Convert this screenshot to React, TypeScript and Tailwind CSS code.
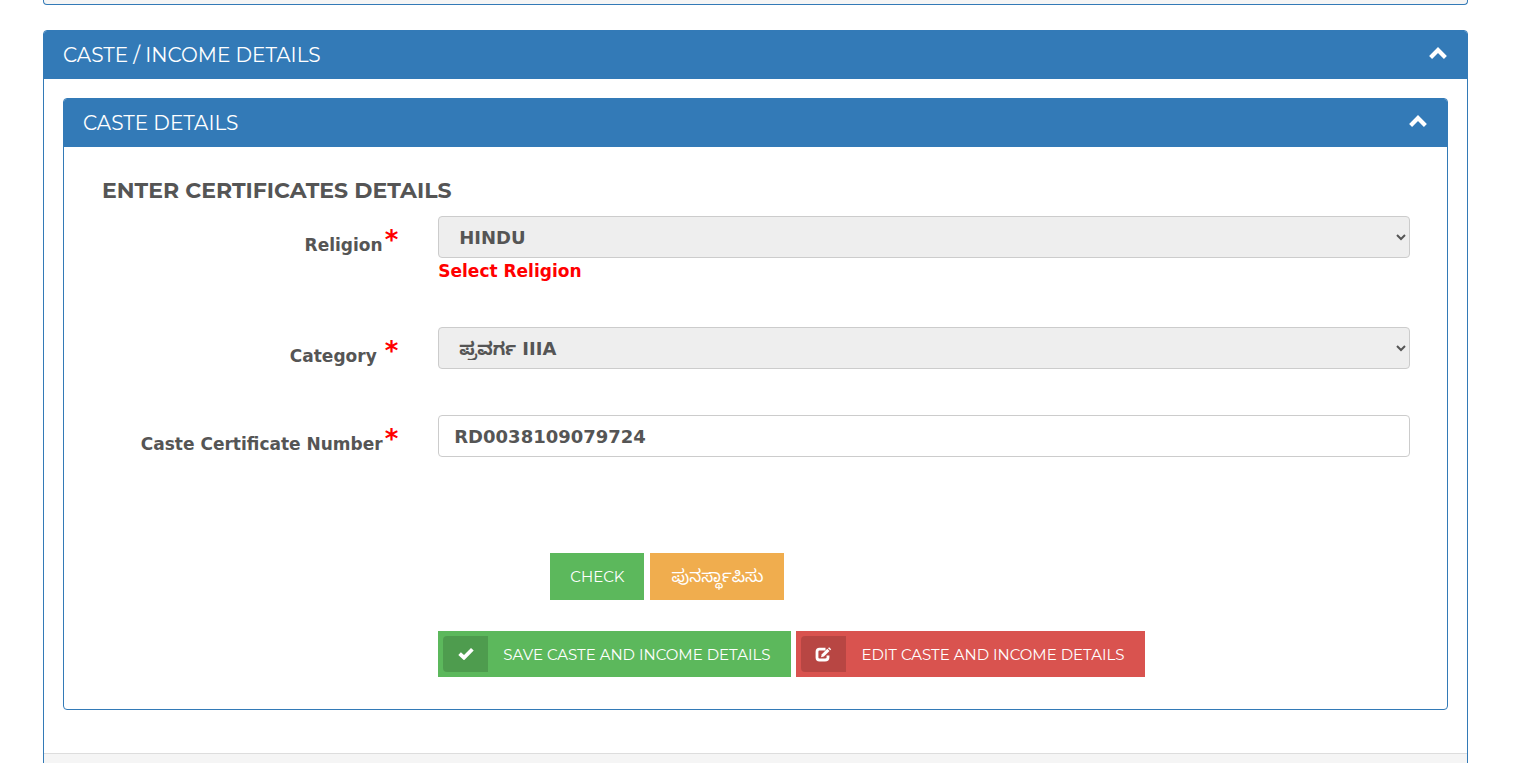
import type { ReactNode } from 'react';

const heading = "font-['Montserrat','Inter',sans-serif]";
const control = 'block h-[42px] w-full rounded border border-[#ccc] text-lg font-bold text-[#555] opacity-100';

function ChevronUp() {
  return (
    <svg width="18" height="13" viewBox="0 0 18 13" fill="none" aria-hidden="true">
      <path d="M1.600 10.400 9 3l7.400 7.400" stroke="#fff" strokeWidth="4.200" />
    </svg>
  );
}

function OkIcon() {
  return (
    <svg width="16" height="14" viewBox="0 0 16 14" aria-hidden="true">
      <path d="M0.300 8 2.900 5.300 6 7.900 13 1 15.700 3.600 6.600 12.800Q6 13.300 5.400 12.800Z" fill="#fff" />
    </svg>
  );
}

function EditIcon() {
  return (
    <svg width="17" height="15" viewBox="0 0 17 15" aria-hidden="true">
      <path
        d="M10.500 2.200H4.500Q2 2.200 2 4.700V10.500Q2 13 4.500 13H10Q13 13 13 10.500V8.500"
        fill="none"
        stroke="#fff"
        strokeWidth="2.800"
      />
      <path d="M6 10.200 6.800 7.300 12.300 1.800 14.500 4 8.900 9.500Z" fill="#fff" />
      <path d="M13 1.200 14.100.2 16.200 2.200 15.200 3.300Z" fill="#fff" />
    </svg>
  );
}

function PanelHeader({ title }: { title: string }) {
  return (
    <header className="flex h-12 items-center justify-between bg-[#337ab7] pr-5 pl-[19px]">
      <h2 className={`${heading} text-xl font-normal text-white`}>{title}</h2>
      <button type="button" aria-label={`Collapse ${title}`} className="pb-1">
        <ChevronUp />
      </button>
    </header>
  );
}

function Field({ id, label, children }: { id: string; label: string; children: ReactNode }) {
  return (
    <div className="grid grid-cols-4">
      <label htmlFor={id} className="flex items-start justify-end gap-0.5 pt-2 pr-[21px] font-bold whitespace-pre">
        <span className="pt-[5px] text-[17px] leading-8">{label}</span>
        <span className="text-[26px] leading-8 text-[red]">*</span>
      </label>
      <div className="col-span-3 pr-[18px] pl-[19px]">{children}</div>
    </div>
  );
}

function IconButton({ icon, className, children }: { icon: ReactNode; className: string; children: ReactNode }) {
  return (
    <button type="button" className={`${heading} ${className} flex h-[46px] items-center pr-[21px] pl-[5px] text-[15px] text-white`}>
      <span className="mr-[15px] flex h-9 w-[45px] items-center justify-center rounded-l bg-black/15">{icon}</span>
      <span className="pt-0.5">{children}</span>
    </button>
  );
}

export default function App() {
  return (
    <div className="h-screen overflow-hidden bg-white pr-[63px] pl-[43px] font-['DejaVu_Sans','Noto_Sans_Kannada',sans-serif] text-[#555]">
      <div className="h-[5px] rounded-b border border-t-0 border-[#337ab7] bg-[#f5f5f5]" />

      <section className="mt-[25px] overflow-hidden rounded border border-[#337ab7]">
        <PanelHeader title="CASTE / INCOME DETAILS" />
        <div className="px-[19px] pt-[19px] pb-[43px]">
          <section className="overflow-hidden rounded border border-[#337ab7]">
            <PanelHeader title="CASTE DETAILS" />
            <form className="px-[19px] pt-7 pb-8">
              <h3 className={`${heading} mb-[9px] px-[19px] text-[22px] leading-8 font-bold`}>
                ENTER CERTIFICATES DETAILS
              </h3>

              <div className="flex flex-col">
                <div className="h-[111px]">
                  <Field id="religion" label="Religion">
                    <select id="religion" disabled className={`${control} bg-[#eee] px-4`}>
                      <option>HINDU</option>
                    </select>
                    <p className="text-[17px] leading-[26px] font-bold text-[red]">Select Religion</p>
                  </Field>
                </div>
                <div className="h-[88px]">
                  <Field id="category" label="Category ">
                    <select id="category" disabled className={`${control} bg-[#eee] px-4`}>
                      <option>ಪ್ರವರ್ಗ IIIA</option>
                    </select>
                  </Field>
                </div>
                <div className="h-[138px]">
                  <Field id="certificate" label="Caste Certificate Number">
                    <input id="certificate" defaultValue="RD0038109079724" className={`${control} bg-white px-[15px]`} />
                  </Field>
                </div>
              </div>

              <div className="grid grid-cols-3">
                <div className="col-start-2 flex gap-1.5 pl-[19px]">
                  <button type="button" className={`${heading} h-[47px] bg-[#5cb85c] px-5 pt-0.5 text-[15px] text-white`}>
                    CHECK
                  </button>
                  <button type="button" className="h-[47px] bg-[#f0ad4e] px-[21px] text-[17px] text-white">
                    ಪುನರ್ಸ್ಥಾಪಿಸು
                  </button>
                </div>
              </div>

              <div className="mt-[31px] grid grid-cols-4">
                <div className="col-span-3 col-start-2 flex gap-[5px] pl-[19px]">
                  <IconButton icon={<OkIcon />} className="bg-[#5cb85c]">
                    SAVE CASTE AND INCOME DETAILS
                  </IconButton>
                  <IconButton icon={<EditIcon />} className="bg-[#d9534f]">
                    EDIT CASTE AND INCOME DETAILS
                  </IconButton>
                </div>
              </div>
            </form>
          </section>
        </div>
        <footer className="h-12 border-t border-[#ddd] bg-[#f5f5f5]" />
      </section>
    </div>
  );
}
